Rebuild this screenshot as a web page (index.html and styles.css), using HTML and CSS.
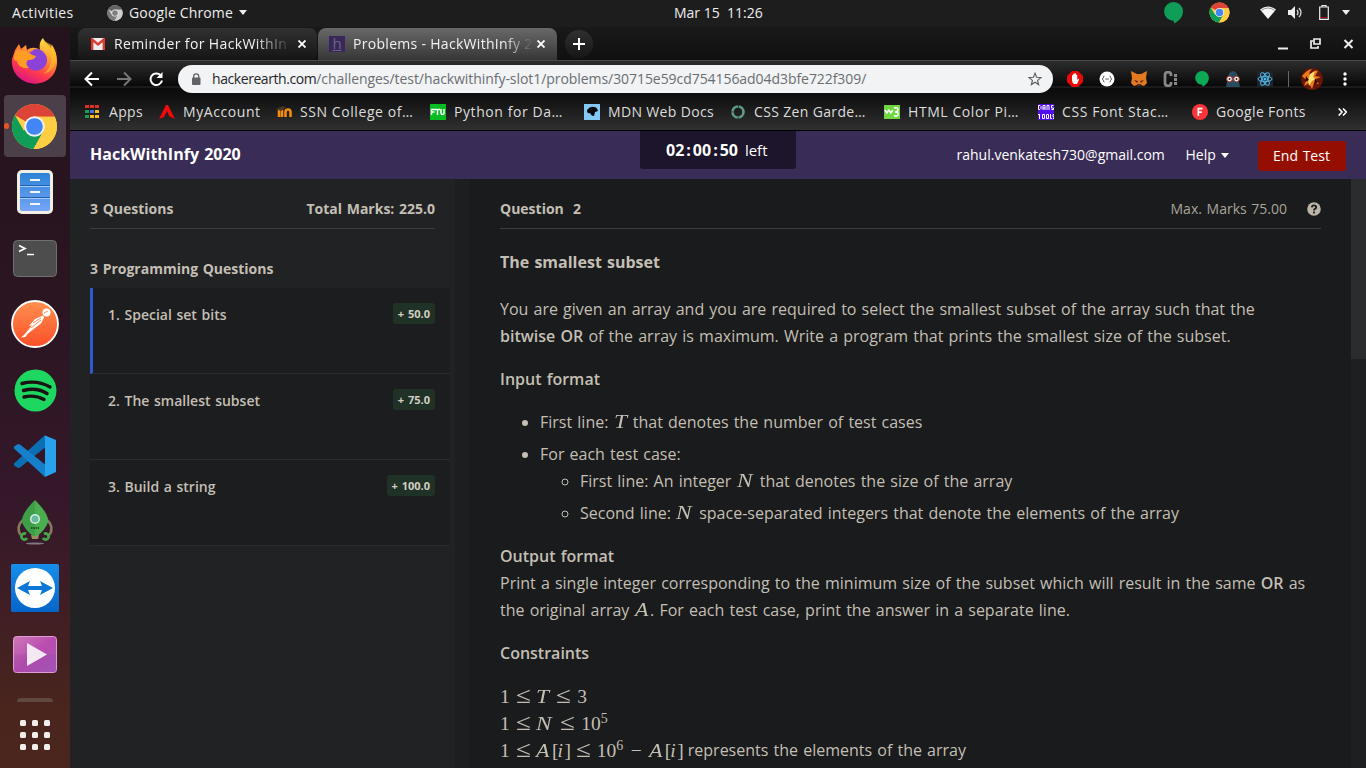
FILE: index.html
```
<!DOCTYPE html>
<html lang="en">
<head>
<meta charset="utf-8">
<title>Problems - HackWithInfy 2020</title>
<link rel="stylesheet" href="styles.css">
</head>
<body>
<svg class="defs" width="0" height="0" aria-hidden="true">
  <defs>
    <symbol id="chrome" viewBox="0 0 48 48">
      <circle cx="24" cy="24" r="23" fill="#ffce42"/>
      <path d="M24 24 4.100 12.500A23 23 0 0 1 43.900 12.500L44 14H24z" fill="#db4437"/>
      <path d="M4.100 12.500A23 23 0 0 0 23 47L33 29 24 24 13 28z" fill="#0f9d58"/>
      <path d="M24 24V14H44.600A23 23 0 0 1 23 47L33 29z" fill="#ffce42"/>
      <circle cx="24" cy="24" r="10.500" fill="#f1f1f1"/><circle cx="24" cy="24" r="8.500" fill="#4285f4"/>
    </symbol>
    <linearGradient id="fox" x1=".8" y1="0" x2=".3" y2="1"><stop offset="0" stop-color="#fff44f"/><stop offset=".35" stop-color="#ff9a2d"/><stop offset=".7" stop-color="#ff3b4b"/><stop offset="1" stop-color="#d9138a"/></linearGradient>
    <linearGradient id="orange" x1="0" y1="0" x2="0" y2="1"><stop offset="0" stop-color="#ff9050"/><stop offset="1" stop-color="#fb4f27"/></linearGradient>
    <linearGradient id="files" x1="0" y1="0" x2="0" y2="1"><stop offset="0" stop-color="#2b83d6"/><stop offset="1" stop-color="#76a5f6"/></linearGradient>
    <linearGradient id="tv" x1="0" y1="0" x2="0" y2="1"><stop offset="0" stop-color="#168eea"/><stop offset="1" stop-color="#0765c9"/></linearGradient>
    <linearGradient id="video" x1="0" y1="0" x2="1" y2="1"><stop offset="0" stop-color="#cf79b8"/><stop offset=".5" stop-color="#b94caf"/><stop offset="1" stop-color="#a75abb"/></linearGradient>
  </defs>
</svg>

<div class="topbar">
  <span class="activities">Activities</span>
  <svg class="gray-chrome" width="16" height="16"><use href="#chrome"/></svg>
  <span class="appname">Google Chrome</span>
  <span class="caret"></span>
  <span class="clock">Mar 15&nbsp; 11:26</span>
  <div class="tray">
    <svg width="19" height="22" viewBox="0 0 19 22"><path d="M9.500 0a9.400 9.400 0 1 0 0 18.800l1 2.700c5-3 8.500-7 8.500-12A9.400 9.400 0 0 0 9.500 0z" fill="#109d58"/></svg>
    <svg class="t-chrome" width="21" height="21"><use href="#chrome"/></svg>
    <svg class="t-wifi" width="16" height="13" viewBox="0 0 16 13"><path d="M0 3.500Q8-2.500 16 3.500L8 13z" fill="#f5f5f5"/><path d="M1.500 4.300Q8-.3 14.500 4.300" fill="none" stroke="#777" stroke-width=".8"/></svg>
    <svg class="t-sound" width="15" height="13" viewBox="0 0 15 13"><path d="M0 4h3l4-4v13L3 9H0z" fill="#eee"/><path d="M9 4q2 2.500 0 5M11 2q4 4.500 0 9" stroke="#ddd" stroke-width="1.300" fill="none"/></svg>
    <svg class="t-batt" width="10" height="15" viewBox="0 0 10 15"><path d="M3 1.500V.500h4v1M.7 2h8.600v12.300H.7z" fill="none" stroke="#eee" stroke-width="1.200"/><path d="M2 12h6v.8H2z" fill="#d00"/></svg>
    <span class="caret"></span>
  </div>
</div>

<div class="desktop">
<nav class="dock">
  <div class="slot"><svg width="48" height="48" viewBox="0 0 48 48"><path d="M4 14 8 8l2 5 5-4 1 5c4-3 9-3 13 0-1-5 0-9 3-12 2 5 6 6 8 10l1-3c8 12 7 29-6 36C19 53-1 42 1 23z" fill="url(#fox)"/><path d="M24 13c6-1 13 5 12 12-1 8-9 11-15 9-8-3-9-12-3-17z" fill="#8a42d8"/><path d="M3 24c-1-5 3-12 5-10l3 1c5-1 8 4 14 5-1 4-6 4-8 4-3 3-1 6 1 8C10 33 7 29 6 25z" fill="#ff9c24"/><path d="M31 4c2 5 11 11 9 22-1 6-5 10-8 12 14-3 17-18 9-29z" fill="#ffb92c" opacity=".65"/></svg></div>
  <div class="slot active"><span class="running"></span><svg width="47" height="47"><use href="#chrome"/></svg></div>
  <div class="slot"><svg width="38" height="46" viewBox="0 0 38 46"><rect x="1" y="1" width="36" height="44" rx="5" fill="#f1eee6"/><rect x="4" y="4" width="30" height="38" rx="2" fill="url(#files)"/><path d="M4 16.500h30M4 28.500h30" stroke="#1b61ad"/><path d="M4 17.500h30M4 29.500h30" stroke="#a9c9ff"/><path d="M15 10v1h8v-1M15 22v1h8v-1M15 34v1h8v-1" stroke="#f5f5f5" stroke-width="2" fill="none"/></svg></div>
  <div class="slot"><svg width="44" height="37" viewBox="0 0 44 37"><rect x=".5" y=".5" width="43" height="36" rx="4" fill="#4d4d4d" stroke="#707070"/><path d="M6 5.500 12 8.500 6 11.500M14 14.500h7" fill="none" stroke="#fff" stroke-width="1.700"/></svg></div>
  <div class="slot"><svg width="48" height="48" viewBox="0 0 48 48"><circle cx="24" cy="24" r="23" fill="url(#orange)" stroke="#fff" stroke-width="1.800"/><circle cx="35.500" cy="12.500" r="4" fill="#fff"/><path d="M32 15.500 24 19l-6 7 3-.5-8 9.500-3 2.500 4.500-.5 2-3L24 28l6-4.500 3-6z" fill="#fff"/><path d="M22 23l8-5M20 28l10-8M33 13l4-2" stroke="#ff6c37" stroke-width=".8"/></svg></div>
  <div class="slot"><svg width="43" height="43" viewBox="0 0 43 43"><circle cx="21.500" cy="21.500" r="21" fill="#1ed760"/><path d="M8 14.500q15-4 28 3.500M9.500 21.500q13-3.500 23.500 3M10 28q11-2.500 20 2.500" stroke="#191414" fill="none" stroke-linecap="round" stroke-width="3.400"/></svg></div>
  <div class="slot"><svg width="43" height="43" viewBox="0 0 43 43"><path d="M31 0 0 28.500v2l4 2.500 2-.5 25-20z" fill="#0a6fb4"/><path d="M31 42 0 13.500v-2L4 9l2 .5 25 20z" fill="#167fc9"/><path d="M31 .500 42 5v32l-11 5z" fill="#29a2ee"/></svg></div>
  <div class="slot"><svg width="36" height="46" viewBox="0 0 36 46"><path d="M6 21C0 26 1 33 4 36M30 21c6 5 5 12 2 15" stroke="#877a5c" stroke-width="2.500" fill="none"/><path d="M14 36h8l-1 4h-6z" fill="#9b8b62"/><path d="M18 1C9 10 4 18 5 23c2 6 7 11 11 14h4c4-3 9-8 11-14C32 18 27 10 18 1z" fill="#3f9f48"/><path d="M18 2v35h2c4-3 9-8 11-14C32 18 27 10 18 2z" fill="#53b557" opacity=".6"/><circle cx="18" cy="20" r="5" fill="#d0eee0"/><circle cx="18" cy="20" r="3.500" fill="#68b99f"/><path d="M14 29h8" stroke="#175522" stroke-width="2" stroke-dasharray="1.500 .8"/><path d="M9 35a3 3 0 1 0 1 4M27 35a3 3 0 1 1-1 4" fill="none" stroke="#42a849" stroke-width="2.800"/><ellipse cx="18" cy="44.500" rx="9" ry="1" fill="#827986"/></svg></div>
  <div class="slot"><svg width="48" height="48" viewBox="0 0 48 48"><rect width="48" height="48" rx="1.500" fill="url(#tv)"/><circle cx="24" cy="24" r="20" fill="#fff"/><path d="M6 24l13-7-2 5h14l-2-5 13 7-13 7 2-5H17l2 5z" fill="#0b76d5"/></svg></div>
  <div class="slot"><svg width="44" height="37" viewBox="0 0 44 37"><rect x=".5" y=".5" width="43" height="36" rx="3" fill="url(#video)" stroke="#e09ad7"/><path d="M1 18.500h42V36H1z" fill="#7a3a99" opacity=".15"/><path d="M14 7 34 18.500 14 30z" fill="#f4e9f3"/></svg></div>
  <div class="peek"></div>
  <svg class="appgrid" width="30" height="30" viewBox="0 0 30 30" fill="#f1eeec"><rect width="6" height="6" rx="1.500"/><rect x="12" width="6" height="6" rx="1.500"/><rect x="24" width="6" height="6" rx="1.500"/><rect y="12" width="6" height="6" rx="1.500"/><rect x="12" y="12" width="6" height="6" rx="1.500"/><rect x="24" y="12" width="6" height="6" rx="1.500"/><rect y="24" width="6" height="6" rx="1.500"/><rect x="12" y="24" width="6" height="6" rx="1.500"/><rect x="24" y="24" width="6" height="6" rx="1.500"/></svg>
</nav>

<div class="browser">
  <div class="tabs">
    <div class="tab">
      <svg width="14" height="12" viewBox="0 0 14 12"><path fill="#eee" d="M0 0h14v12H0z"/><path d="M1.200 12V1.500L7 6.500l5.800-5V12" stroke="#dc3c2e" stroke-width="2.400" fill="none"/></svg>
      <span class="tabtitle t1">Reminder for HackWithIn</span>
      <svg class="x" width="8" height="8" viewBox="0 0 8 8"><path d="M.5.5l7 7M7.500.5l-7 7" stroke="#fff" stroke-width="1.800"/></svg>
    </div>
    <div class="tab current">
      <span class="hicon">h</span>
      <span class="tabtitle t2">Problems - HackWithInfy 2</span>
      <svg class="x" width="8" height="8" viewBox="0 0 8 8"><path d="M.5.5l7 7M7.500.5l-7 7" stroke="#fff" stroke-width="1.800"/></svg>
    </div>
    <div class="newtab"><svg width="12" height="12" viewBox="0 0 12 12"><path d="M6 0v12M0 6h12" stroke="#fff" stroke-width="2"/></svg></div>
    <svg class="winctl" width="76" height="14" viewBox="0 0 76 14"><path d="M0 11.500h10" stroke="#eee" stroke-width="2"/><path d="M36 2h6v5h-6zM35 4h-2v7h7v-2" fill="none" stroke="#eee" stroke-width="1.700"/><path d="M66.500 3l8 8M74.500 3l-8 8" stroke="#eee" stroke-width="2"/></svg>
  </div>

  <div class="toolbar">
    <svg class="nav" width="80" height="16" viewBox="0 0 80 16" fill="none" stroke-width="2"><path d="M15 8H2M8 1.500 1.500 8 8 14.500" stroke="#fff"/><path d="M33 8h13M40 1.500 46.500 8 40 14.500" stroke="#777"/><path d="M76.500 4.200A5.800 5.800 0 1 0 78 9.500" stroke="#fff"/><path d="M78.500 1v6h-6z" fill="#fff"/></svg>
    <div class="urlbar">
      <svg width="10" height="12" viewBox="0 0 10 12"><rect x="1" y="4.500" width="8.500" height="7.500" rx="1" fill="#5f6368"/><path d="M2.700 5V3.300a2.500 2.500 0 0 1 5 0V5" fill="none" stroke="#5f6368" stroke-width="1.300"/></svg>
      <span class="url"><span class="host">hackerearth.com</span><span class="path">/challenges/test/hackwithinfy-slot1/problems/30715e59cd754156ad04d3bfe722f309/</span></span>
      <svg class="star" width="14" height="14" viewBox="0 0 14 14"><path d="M7 1.300 8.600 5.300l4.300.3-3.300 2.800 1 4.200L7 10.300l-3.600 2.300 1-4.200L1.100 5.600l4.300-.3z" fill="none" stroke="#5f6368" stroke-width="1.200"/></svg>
    </div>
    <div class="exts">
      <svg width="16" height="16" viewBox="0 0 16 16"><path d="M5 0h6l5 5v6l-5 5H5l-5-5V5z" fill="#e60a0a"/><path d="M5 8V4.500q.6-1 1.200 0V3q.7-1 1.300 0v-.5q.7-1 1.300 0V4q.8-1 1.400 0V9l1-1.200q1-.3.8.7L10 13H7q-2-1-2-5z" fill="#fff"/></svg>
      <svg width="16" height="16" viewBox="0 0 16 16"><circle cx="8" cy="8" r="7.500" fill="#fff"/><path d="M5.500 5Q4.200 5 4.400 6.700L3.300 8l1.100 1.300Q4.200 11 5.500 11M10.500 5q1.300 0 1.100 1.700L12.700 8l-1.100 1.300q.2 1.700-1.100 1.700M6.300 8h3.400" fill="none" stroke="#444" stroke-width=".9"/></svg>
      <svg width="16" height="16" viewBox="0 0 16 16"><path d="M0 0l6 3h4l6-3-1 7 1 5-3 3-3-1H6l-3 1-3-3 1-5z" fill="#e37a20"/><path d="M3 9l4 1-1 2zM13 9l-4 1 1 2zM6 13h4v2H6z" fill="#542a18"/></svg>
      <svg width="16" height="16" viewBox="0 0 16 16"><path d="M8 5V3.500Q8 1.200 5 1.200T2 4v8q0 2.800 3 2.800T8 12.500V11" stroke="#888" stroke-width="2.700" fill="none"/><path d="M11 3h3v3h-3zM11 7h3v3h-3zM11 11h3v3h-3z" fill="#888"/></svg>
      <svg width="14" height="16" viewBox="0 0 19 22"><path d="M9.500 0a9.400 9.400 0 1 0 0 18.800l1 2.700c5-3 8.500-7 8.500-12A9.400 9.400 0 0 0 9.500 0z" fill="#0caa56"/></svg>
      <svg width="16" height="16" viewBox="0 0 16 16"><path d="M3 6Q4 0 8 0t5 6l2 10H1z" fill="#284b60"/><circle cx="4.500" cy="8" r="2.800" fill="#fff" stroke="#b93525"/><circle cx="11.500" cy="8" r="2.800" fill="#fff" stroke="#b93525"/><circle cx="4.500" cy="8" r="1" fill="#222"/><circle cx="11.500" cy="8" r="1" fill="#222"/></svg>
      <svg width="16" height="16" viewBox="0 0 16 16"><path fill="#20232a" d="M0 0h16v16H0z"/><g fill="none" stroke="#52b8e8"><ellipse cx="8" cy="8" rx="7" ry="2.700"/><ellipse cx="8" cy="8" rx="7" ry="2.700" transform="rotate(60 8 8)"/><ellipse cx="8" cy="8" rx="7" ry="2.700" transform="rotate(120 8 8)"/></g><circle cx="8" cy="8" r="1.500" fill="#52b8e8"/></svg>
    </div>
    <span class="sep"></span>
    <svg class="avatar" width="22" height="22" viewBox="0 0 22 22"><circle cx="11" cy="11" r="11" fill="#671506"/><path d="M1 8q6-7 10-7-4 4-2 6 5-6 8-4l-3 5 6 1-5 2 3 5-5-1-2 6-3-6-5 3 2-6z" fill="#e97919"/><path d="M9 6l5-3-2 6 3 2-4 2-3 5-1-6z" fill="#ffe070"/><path d="M5 8l3 4-4 2zM14 10l3 4-4 3z" fill="#330904"/></svg>
    <svg width="4" height="14" viewBox="0 0 4 14" fill="#fff"><circle cx="2" cy="2" r="1.700"/><circle cx="2" cy="7" r="1.700"/><circle cx="2" cy="12" r="1.700"/></svg>
  </div>

  <div class="bookmarks">
    <span class="bm w74"><svg width="16" height="16" viewBox="0 0 16 16"><path d="M0 1h4v3H0zM5 1h4v3H5zM10 1h4v3h-4z" fill="#e22c24"/><path d="M0 6h4v3H0zM0 11h4v3H0z" fill="#13a05a"/><path d="M5 6h4v3H5z" fill="#4274ee"/><path d="M10 6h4v3h-4zM5 11h4v3H5zM10 11h4v3h-4z" fill="#fbbb19"/></svg>Apps</span>
    <span class="bm w117 b2"><svg width="16" height="16" viewBox="0 0 16 16"><path d="M7 1h2l7 14-6-3-2-5-3 6-5 2z" fill="#f20b0b"/></svg>MyAccount</span>
    <span class="bm w154 b3"><svg width="16" height="16" viewBox="0 0 16 16"><path d="M3 13V7q0-1.500 1.500-1.500M9.500 13V8q0-2.500 2.500-2.500t2.500 2.500v5M6 6v7" stroke="#f28c0c" stroke-width="2.600" fill="none"/><path d="M0 5l7-3 3 2-5 3z" fill="#473622"/></svg>SSN College of…</span>
    <span class="bm w154 b4"><svg width="16" height="16" viewBox="0 0 16 16"><path fill="#06bc20" d="M0 0h16v16H0z"/><path d="M1.500 11V5.500H5M2 8h2.500M5 5.500h5M7.500 6v5M11 5v4q0 1.500 1.500 1.500T14 9V5" stroke="#fff" stroke-width="1.500" fill="none"/></svg>Python for Da…</span>
    <span class="bm w146"><svg width="16" height="16" viewBox="0 0 16 16"><path fill="#84c8f5" d="M0 0h16v16H0z"/><path d="M3 6q3-4 7-3 3 0 4 4l-3 1-1 4q-3 0-4-3-3 1-3-3z" fill="#05080b"/></svg>MDN Web Docs</span>
    <span class="bm w154"><svg width="16" height="16" viewBox="0 0 16 16"><circle cx="8" cy="8" r="5.500" stroke="#629c88" stroke-width="2.600" stroke-dasharray="7.900 .74" fill="none"/></svg>CSS Zen Garde…</span>
    <span class="bm w154 b7"><svg width="16" height="16" viewBox="0 0 16 16"><path fill="#70d741" d="M0 1h16v14H0z"/><path d="M.8 6l2 3 2-3 2 3 2-3M10 4q4-1 4 1.500Q14 8 11 8q4 0 3 3-1 2-4 .5" stroke="#fff" stroke-width="1.500" fill="none"/></svg>HTML Color Pi…</span>
    <span class="bm w154 b8"><svg width="16" height="16" viewBox="0 0 16 16"><path fill="#5010ed" d="M0 0h16v16H0z"/><path d="M.5 1.500v4H2L3 4.500v-2l-1-1zM5 6V1.500h2V6M5 4h2M9 6V1.500h2V6M15.500 1.500h-2V4h2v1.500h-2M0 10.500h2M1.500 10.500V15M4.500 10.500h2v4h-2zM8.500 10.500h2v4h-2zM12.500 10v4.500H14M16 10.500h-1v2h1v2h-1" stroke="#fff" fill="none"/></svg>CSS Font Stac…</span>
    <span class="bm"><svg width="16" height="16" viewBox="0 0 16 16"><circle cx="8" cy="8" r="8" fill="#fb3539"/><path d="M6.300 12V4.700h4.200M6.300 8.200h3.500" stroke="#fff" stroke-width="1.700" fill="none"/></svg>Google Fonts</span>
    <svg class="more" width="9" height="8" viewBox="0 0 9 8"><path d="M.7.5 4 4 .7 7.500M5 .5 8.300 4 5 7.500" fill="none" stroke="#fff" stroke-width="1.600"/></svg>
  </div>

  <header class="header">
    <h1>HackWithInfy 2020</h1>
    <div class="timer"><b>02<span>:</span>00<span>:</span>50</b> left</div>
    <span class="email">rahul.venkatesh730@gmail.com</span>
    <span class="help">Help<i></i></span>
    <span class="end">End Test</span>
  </header>

  <div class="page">
    <aside class="side">
      <div class="sidehead"><span>3 Questions</span><span>Total Marks: 225.0</span></div>
      <h2>3 Programming Questions</h2>
      <div class="q sel"><span>1. Special set bits</span><b>+ 50.0</b></div>
      <div class="q"><span>2. The smallest subset</span><b>+ 75.0</b></div>
      <div class="q"><span>3. Build a string</span><b>+ 100.0</b></div>
    </aside>
    <div class="gutter"></div>
    <main class="main">
      <div class="mainhead"><b>Question&nbsp; 2</b><span>Max. Marks 75.00</span><svg width="14" height="14" viewBox="0 0 14 14"><circle cx="7" cy="7" r="6.800" fill="#bcb5a7"/><path d="M4.800 5.300Q5 3.400 7 3.400t2.200 1.800Q9.200 6.300 8 6.900 7 7.400 7 8.500M7 9.600v1.900" stroke="#191b1c" stroke-width="1.800" fill="none"/></svg></div>
      <h3>The smallest subset</h3>
      <p>You are given an array and you are required to select the smallest subset of the array such that the<br><b>bitwise OR</b> of the array is maximum. Write a program that prints the smallest size of the subset.</p>
      <p><b>Input format</b></p>
      <ul>
        <li>First line: <i class="m mt">T</i> that denotes the number of test cases</li>
        <li>For each test case:
          <ul>
            <li>First line: An integer <i class="m mn">N</i> that denotes the size of the array</li>
            <li>Second line: <i class="m mn">N</i> space-separated integers that denote the elements of the array</li>
          </ul>
        </li>
      </ul>
      <p><b>Output format</b><br>Print a single integer corresponding to the minimum size of the subset which will result in the same <b>OR</b> as<br>the original array <i class="m ma">A</i>. For each test case, print the answer in a separate line.</p>
      <p><b>Constraints</b></p>
      <p class="cons"><span class="math"><span>1</span><span class="rel">≤</span><i class="mt">T</i><span class="rel">≤</span><span>3</span></span><br>
      <span class="math"><span>1</span><span class="rel">≤</span><i class="mn">N</i><span class="rel">≤</span><span>10</span><span class="sup">5</span></span><br>
      <span class="math"><span>1</span><span class="rel">≤</span><i class="ma">A</i><span class="br">[</span><i class="mi">i</i><span class="br">]</span><span class="rel">≤</span><span>10</span><span class="sup">6</span><span class="minus">−</span><i class="ma">A</i><span class="br">[</span><i class="mi">i</i><span class="br">]</span></span> represents the elements of the array</p>
    </main>
    <div class="scroll"><div class="thumb"></div></div>
  </div>
</div>
</div>
</body>
</html>
```
FILE: styles.css
```
* { box-sizing: border-box; }
body { margin: 0; width: 1366px; height: 768px; overflow: hidden; background: #191b1c; font: 14px "Open Sans", sans-serif; color: #c4bfb4; }
svg { flex: none; display: block; }
.defs { position: absolute; }

/* desktop bar */
.topbar { height: 27px; background: #1d1d1d; color: #eee; display: flex; align-items: center; padding: 0 0 2px 12px; letter-spacing: .4px; white-space: nowrap; }
.activities { width: 95px; }
.gray-chrome { filter: grayscale(1); }
.appname { margin-left: 6px; width: 110px; letter-spacing: .15px; }
.caret { border: 4.500px solid transparent; border-top: 5px solid #eee; border-bottom: 0; }
.clock { margin-left: 427px; letter-spacing: 0; }
.tray { margin-left: auto; padding-right: 16px; display: flex; align-items: center; }
.t-chrome { margin-left: 26px; }
.t-wifi { margin-left: 30px; }
.t-sound { margin-left: 12px; }
.t-batt { margin: 0 13px 0 16px; }

.desktop { display: flex; height: 741px; }

/* dock */
.dock { width: 70px; flex: none; background: linear-gradient(#24131d, #2a1521 35%, #35182a 65%, #4a251e 92%, #4b261d); display: flex; flex-direction: column; align-items: center; padding-top: 2px; }
.slot { width: 62px; height: 62px; margin-bottom: 4px; flex: none; display: flex; align-items: center; justify-content: center; border-radius: 4px; position: relative; }
.active { background: #4b4049; }
.active svg { margin-right: 1px; }
.running { position: absolute; left: 0; top: 28px; width: 5px; height: 6px; border-radius: 3px; background: #e95420; }
.peek { width: 36px; height: 4px; margin-top: 9px; border-radius: 8px 8px 0 0; background: #604740; }
.appgrid { margin-top: 18px; }

/* browser frame */
.browser { width: 1296px; display: flex; flex-direction: column; }
.tabs { height: 34px; background: linear-gradient(#191919, #101010); border-bottom: 1px solid #494949; display: flex; padding: 1px 10px 0 8px; }
.tab { width: 239px; border-radius: 8px 8px 6px 6px; background: linear-gradient(#313131, #222 55%, #151515); display: flex; align-items: center; padding: 0 0 1px 13px; color: #f1f1f1; }
.current { width: 239px; margin-left: 1px; padding-left: 11px; border-radius: 8px 8px 0 0; background: linear-gradient(#686868, #505050 50%, #363636); }
.tabtitle { font-size: 14px; letter-spacing: .38px; white-space: nowrap; overflow: hidden; width: 180px; margin-left: 9px; -webkit-mask-image: linear-gradient(90deg, #000 140px, transparent 178px); mask-image: linear-gradient(90deg, #000 140px, transparent 178px); }
.t2 { margin-left: 8px; letter-spacing: .3px; -webkit-mask-image: linear-gradient(90deg, #000 150px, transparent 180px); mask-image: linear-gradient(90deg, #000 150px, transparent 180px); }
.x { margin-left: 4px; }
.hicon { width: 16px; height: 16px; background: #382859; color: #6d6484; font-size: 15px; line-height: 15px; text-align: center; text-decoration: underline; }
.newtab { width: 28px; height: 28px; margin: 2px 0 0 8px; border-radius: 50%; background: linear-gradient(#303030, #161616); display: flex; align-items: center; justify-content: center; }
.winctl { margin: 9px 2px 0 auto; }
.toolbar { height: 36px; background: linear-gradient(#2d2d2d, #080808 25px, #2b2b2b 26px, #0b0b0b 27px, #101010); display: flex; align-items: center; padding: 0 19px 0 14px; }
.urlbar { width: 875px; height: 28px; margin-left: 14px; border-radius: 14px; background: #f1f3f4; display: flex; align-items: center; padding: 0 11px 1px 13px; }
.url { margin-left: 11px; width: 816px; white-space: nowrap; }
.host { color: #252629; letter-spacing: -.43px; }
.path { color: #6a6e72; letter-spacing: -.06px; }
.star { margin-left: auto; }
.exts { display: flex; align-items: center; gap: 16px; margin-left: 14px; width: 208px; }
.sep { width: 1px; height: 16px; margin-left: 14px; background: #666; }
.avatar { margin: 0 20px 0 12px; }
.bookmarks { height: 34px; background: linear-gradient(#101010, #303030); border-bottom: 1px solid #000; display: flex; align-items: center; padding: 0 19px 4px 15px; color: #ddd; letter-spacing: .35px; white-space: nowrap; }
.bm { display: flex; align-items: center; gap: 8px; flex: none; height: 28px; }
.w74 { width: 74px; } .w117 { width: 117px; } .w146 { width: 146px; } .w154 { width: 154px; }
.b2, .b3, .b4, .b7, .b8 { letter-spacing: .58px; }
.more { margin-left: auto; }

/* test header */
.header { height: 48px; flex: none; background: #392c56; color: #fff; display: flex; padding: 0 20px; white-space: nowrap; word-spacing: 1px; }
.header h1 { margin: 0; width: 550px; font-size: 16px; line-height: 46px; font-weight: 700; }
.timer { width: 156px; height: 38px; background: #1c152b; border-radius: 0 0 3px 3px; padding-left: 26px; line-height: 38px; font-size: 15px; }
.timer b { font-size: 16px; margin-right: 2px; }
.timer b span { margin: 0 2px; }
.email { width: 229px; margin-left: 160.500px; line-height: 47px; }
.help { width: 72px; line-height: 47px; }
.help i { display: inline-block; border: 4.500px solid transparent; border-top: 5px solid #fff; border-bottom: 0; margin-left: 5px; vertical-align: 2px; }
.end { width: 88px; height: 30px; margin-top: 10px; border-radius: 3px; background: #940f02; text-align: center; line-height: 30px; }

/* content */
.page { flex: 1; display: flex; min-height: 0; word-spacing: 1px; }
.side { width: 385px; flex: none; background: #202224; padding: 0 5px 0 20px; }
.sidehead, .mainhead { height: 50px; border-bottom: 1px solid #3b3e40; display: flex; align-items: center; padding-top: 11px; }
.sidehead { width: 345px; justify-content: space-between; font-weight: 700; line-height: 20px; }
.side h2 { margin: 0; height: 59px; padding-top: 30px; font-size: 14px; line-height: 20px; font-weight: 700; }
.q { width: 360px; height: 86px; background: #1b1d1e; border-bottom: 1px solid #292c2e; display: flex; justify-content: space-between; align-items: flex-start; padding: 15px 15px 0 18px; font-weight: 600; line-height: 24px; }
.sel { border-left: 3px solid #2f59cc; padding-left: 15px; }
.q b { height: 21px; padding: 0 5px; font-size: 11px; line-height: 21px; font-weight: 700; border-radius: 3px; background: #203226; color: #d3cec4; }
.gutter { width: 14px; flex: none; background: #1c1e20; }
.main { width: 882px; flex: none; padding: 0 30px 0 31px; font-size: 16px; line-height: 27px; overflow: hidden; white-space: nowrap; }
.mainhead { font-size: 14px; line-height: 20px; }
.mainhead b { font-weight: 700; }
.mainhead span { margin-left: auto; margin-right: 20px; color: #aaa59b; }
.main h3 { font-size: 16px; font-weight: 700; margin: 20px 0; }
.main p { margin: 0 0 16px; }
.main p b { font-weight: 600; }
.main ul { margin: 0 0 16px; padding-left: 40px; }
.main ul ul { margin: 0; }
.main li { margin-bottom: 5px; }
.main li li:last-child, .main > ul > li:last-child { margin-bottom: 0; }
.m, .math { font-family: "Liberation Serif", serif; font-size: 19.500px; word-spacing: 0; }
.m { display: inline-block; height: 12px; line-height: 12px; }
.mt { width: 14px; } .mn { width: 18px; } .ma { width: 15.500px; } .mi { width: 7px; }
.mt, .mn { transform: scaleX(1.200); transform-origin: 0 50%; }
.ma { transform: scaleX(1.130); transform-origin: 0 50%; }
.math { display: inline-flex; height: 20px; align-items: baseline; line-height: 22px; vertical-align: baseline; position: relative; top: 1px; }
.rel { width: 26.700px; text-align: center; font-size: 23px; transform: scaleX(1.180); }
.math .sup { font-size: 14px; position: relative; top: -7px; }
.br { width: 5.500px; }
.minus { width: 26px; text-align: center; }
.scroll { width: 15px; background: #1d1f20; }
.thumb { height: 180px; background: #2a2c2e; }
```
